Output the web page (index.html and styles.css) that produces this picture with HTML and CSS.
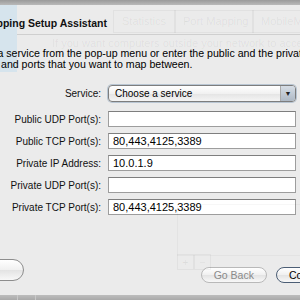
FILE: index.html
```html
<!DOCTYPE html>
<html lang="en">
<head>
  <meta charset="UTF-8">
  <title>Port Mapping Setup Assistant</title>
  <link rel="stylesheet" href="styles.css">
</head>
<body>
  <div class="window">
    <div class="topbar"></div>
    <div class="header">
      <div class="side-strip"></div>
      <h1 class="title">Port Mapping Setup Assistant</h1>
    </div>
    <div class="intro">
      <p>Choose a service from the pop-up menu or enter the public and the private</p>
      <p>and ports that you want to map between.</p>
    </div>
    <div class="form">
      <label>Service:</label>
      <div class="popup">
        <span>Choose a service</span>
        <span class="popup-arrow">&#9660;</span>
      </div>
      <label>Public UDP Port(s):</label>
      <div class="field"></div>
      <label>Public TCP Port(s):</label>
      <div class="field">80,443,4125,3389</div>
      <label>Private IP Address:</label>
      <div class="field">10.0.1.9</div>
      <label>Private UDP Port(s):</label>
      <div class="field"></div>
      <label>Private TCP Port(s):</label>
      <div class="field">80,443,4125,3389</div>
    </div>
    <div class="buttons">
      <div class="btn btn-left"></div>
      <div class="spacer"></div>
      <div class="btn btn-disabled">Go Back</div>
      <div class="btn btn-default">Continue</div>
    </div>
    <div class="bottombar">
      <div class="seg"></div>
      <div class="seg"></div>
    </div>

    <!-- faint window behind the sheet -->
    <div class="ghost">
      <div class="ghost-tabs">
        <span class="ghost-tab t1">Statistics</span>
        <span class="ghost-tab t2">Port Mapping</span>
        <span class="ghost-tab t3">MobileMe</span>
      </div>
      <div class="ghost-text g1">If you want computers outside your network to access</div>
      <div class="ghost-table"></div>
      <div class="ghost-pm"><span>+</span><span>&minus;</span></div>
    </div>
  </div>
</body>
</html>
```

FILE: styles.css
```css
body {
  margin: 0;
  font-family: "Liberation Sans", Arial, sans-serif;
  background: #e9e9e9;
}
.window {
  width: 300px;
  height: 300px;
  overflow: hidden;
  position: relative;
  background: #ebebeb;
  display: flex;
  flex-direction: column;
}
.topbar {
  height: 5px;
  background: linear-gradient(#9a9a9a, #b9b9b9);
}
.header {
  height: 29px;
  display: flex;
  align-items: center;
  border-bottom: 1px solid #cfcfcf;
  position: relative;
}
.side-strip {
  position: absolute;
  left: 0;
  top: 0;
  width: 17px;
  height: 67px;
  background: #d6e4ed;
}
.title {
  position: relative;
  margin: 6px 0 0 -42px;
  font-size: 10.5px;
  font-weight: bold;
  color: #111;
  white-space: nowrap;
}
.intro {
  margin: 13px 0 0 -42px;
  font-size: 10.6px;
  line-height: 11px;
  white-space: nowrap;
  position: relative;
}
.intro p {
  margin: 0;
}
.intro p + p {
  margin-left: 43px;
}
.form {
  margin-top: 15px;
  display: grid;
  grid-template-columns: 101px 188px;
  column-gap: 7px;
  row-gap: 6px;
  align-items: center;
  font-size: 10px;
}
.form label {
  text-align: right;
  white-space: nowrap;
  color: #111;
}
.form label:first-child {
  margin-bottom: 3px;
}
.popup {
  height: 15px;
  margin-bottom: 3px;
  border: 1px solid #7d7d7d;
  border-radius: 4px;
  background: linear-gradient(#ffffff, #f1f1f1 50%, #e4e4e4 51%, #f4f4f4);
  display: flex;
  align-items: center;
  padding-left: 6px;
  box-shadow: 0 0 0 1px #b9c6d3;
}
.popup span:first-child {
  flex: 1;
}
.popup-arrow {
  width: 14px;
  height: 15px;
  border-left: 1px solid #a9a9a9;
  border-radius: 0 3px 3px 0;
  background: linear-gradient(#d6dde5, #aeb9c5);
  font-size: 7px;
  line-height: 15px;
  text-align: center;
  color: #222;
}
.field {
  height: 14px;
  line-height: 14px;
  border: 1px solid #9d9d9d;
  border-top-color: #7e7e7e;
  background: #fff;
  padding-left: 4px;
  font-size: 11px;
  white-space: nowrap;
}
.buttons {
  margin-top: 46px;
  display: flex;
  align-items: flex-end;
  height: 22px;
}
.spacer {
  flex: 1;
}
.btn {
  height: 14px;
  line-height: 14px;
  border: 1px solid #9a9a9a;
  border-radius: 8px;
  background: linear-gradient(#ffffff, #f0f0f0 50%, #e3e3e3 51%, #f8f8f8);
  font-size: 10.5px;
  padding: 0 12px;
  white-space: nowrap;
}
.btn-left {
  width: 12px;
  height: 20px;
  margin-left: -14px;
  margin-bottom: 2px;
  border-radius: 11px;
  border-color: #8d8d8d;
}
.btn-disabled {
  color: #8a8a8a;
  border-color: #b9b9b9;
  margin-right: 9px;
}
.btn-default {
  border-color: #4c5e75;
  color: #000;
  margin-right: -44px;
}
.bottombar {
  margin-top: auto;
  height: 5px;
  background: linear-gradient(#bdbdbd, #a9a9a9);
  display: flex;
}
.seg {
  width: 17px;
  border-right: 1px solid #c9c9c9;
}
.ghost {
  position: absolute;
  inset: 0;
  pointer-events: none;
  color: rgba(0, 0, 0, 0.06);
  font-size: 11px;
}
.ghost-tab {
  position: absolute;
  top: 10px;
  height: 21px;
  line-height: 21px;
  border: 1px solid rgba(0, 0, 0, 0.04);
  padding: 0 8px;
  white-space: nowrap;
}
.t1 { left: 113px; width: 45px; }
.t2 { left: 174px; width: 62px; }
.t3 { left: 252px; width: 50px; }
.ghost-text {
  position: absolute;
  white-space: nowrap;
}
.g1 { left: 52px; top: 37px; }
.ghost-table {
  position: absolute;
  left: 177px;
  top: 204px;
  width: 130px;
  height: 50px;
  border: 1px solid rgba(0, 0, 0, 0.03);
}
.ghost-pm {
  position: absolute;
  left: 177px;
  top: 254px;
  display: flex;
}
.ghost-pm span {
  width: 15px;
  height: 14px;
  line-height: 14px;
  text-align: center;
  border: 1px solid rgba(0, 0, 0, 0.04);
}
```
